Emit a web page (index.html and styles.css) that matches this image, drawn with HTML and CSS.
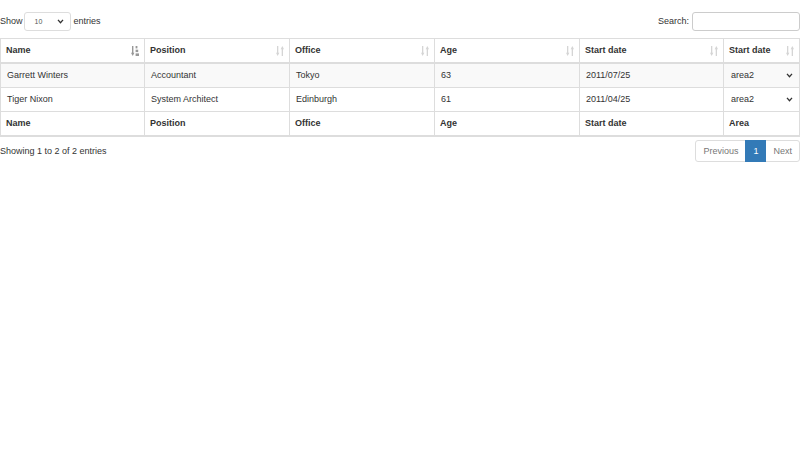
FILE: index.html
```html
<!DOCTYPE html>
<html lang="en">
<head>
<meta charset="utf-8">
<title>DataTable</title>
<link rel="stylesheet" href="styles.css">
</head>
<body>
<div class="wrapper">
  <div class="toolbar">
    <label class="length">Show
      <span class="length-select"><span>10</span>
        <svg class="chev" viewBox="0 0 8 6" width="7" height="5"><polyline points="1,1 4,4.4 7,1" fill="none" stroke="#333" stroke-width="1.6"/></svg>
      </span>
      entries</label>
    <label class="search">Search: <input type="text" class="search-input"></label>
  </div>
  <table class="grid">
    <thead>
      <tr>
        <th class="c1"><div class="th-in"><span>Name</span><svg class="sort asc" viewBox="0 0 8 10" width="8" height="10"><rect x="1" y="0" width="1.4" height="8"/><polygon points="0,6.8 3.4,6.8 1.7,10"/><rect x="4.6" y="0" width="1.8" height="2.4"/><rect x="4.6" y="3.7" width="2.6" height="2.4"/><rect x="4.6" y="7.4" width="3.4" height="2.6"/></svg></div></th>
        <th class="c2"><div class="th-in"><span>Position</span><svg class="sort both" viewBox="0 0 8 10" width="8" height="10"><rect x="1" y="0" width="1.3" height="8"/><polygon points="0,6.8 3.3,6.8 1.65,10"/><rect x="5.7" y="2" width="1.3" height="8"/><polygon points="4.7,3.2 8,3.2 6.35,0"/></svg></div></th>
        <th class="c3"><div class="th-in"><span>Office</span><svg class="sort both" viewBox="0 0 8 10" width="8" height="10"><rect x="1" y="0" width="1.3" height="8"/><polygon points="0,6.8 3.3,6.8 1.65,10"/><rect x="5.7" y="2" width="1.3" height="8"/><polygon points="4.7,3.2 8,3.2 6.35,0"/></svg></div></th>
        <th class="c4"><div class="th-in"><span>Age</span><svg class="sort both" viewBox="0 0 8 10" width="8" height="10"><rect x="1" y="0" width="1.3" height="8"/><polygon points="0,6.8 3.3,6.8 1.65,10"/><rect x="5.7" y="2" width="1.3" height="8"/><polygon points="4.7,3.2 8,3.2 6.35,0"/></svg></div></th>
        <th class="c5"><div class="th-in"><span>Start date</span><svg class="sort both" viewBox="0 0 8 10" width="8" height="10"><rect x="1" y="0" width="1.3" height="8"/><polygon points="0,6.8 3.3,6.8 1.65,10"/><rect x="5.7" y="2" width="1.3" height="8"/><polygon points="4.7,3.2 8,3.2 6.35,0"/></svg></div></th>
        <th class="c6"><div class="th-in"><span>Start date</span><svg class="sort both" viewBox="0 0 8 10" width="8" height="10"><rect x="1" y="0" width="1.3" height="8"/><polygon points="0,6.8 3.3,6.8 1.65,10"/><rect x="5.7" y="2" width="1.3" height="8"/><polygon points="4.7,3.2 8,3.2 6.35,0"/></svg></div></th>
      </tr>
    </thead>
    <tbody>
      <tr class="odd">
        <td>Garrett Winters</td>
        <td>Accountant</td>
        <td>Tokyo</td>
        <td>63</td>
        <td>2011/07/25</td>
        <td class="area-cell"><div class="area-select"><span>area2</span><svg class="chev" viewBox="0 0 8 6" width="7" height="5"><polyline points="1,1 4,4.4 7,1" fill="none" stroke="#333" stroke-width="1.6"/></svg></div></td>
      </tr>
      <tr class="even">
        <td>Tiger Nixon</td>
        <td>System Architect</td>
        <td>Edinburgh</td>
        <td>61</td>
        <td>2011/04/25</td>
        <td class="area-cell"><div class="area-select"><span>area2</span><svg class="chev" viewBox="0 0 8 6" width="7" height="5"><polyline points="1,1 4,4.4 7,1" fill="none" stroke="#333" stroke-width="1.6"/></svg></div></td>
      </tr>
    </tbody>
    <tfoot>
      <tr>
        <th>Name</th>
        <th>Position</th>
        <th>Office</th>
        <th>Age</th>
        <th>Start date</th>
        <th>Area</th>
      </tr>
    </tfoot>
  </table>
  <div class="bottom">
    <div class="info">Showing 1 to 2 of 2 entries</div>
    <ul class="pagination">
      <li class="page disabled">Previous</li>
      <li class="page active">1</li>
      <li class="page disabled">Next</li>
    </ul>
  </div>
</div>
</body>
</html>
```

FILE: styles.css
```css
html, body {
  margin: 0;
  padding: 0;
  background: #fff;
}
body {
  font-family: "Liberation Sans", Arial, sans-serif;
  font-size: 9px;
  line-height: 13px;
  color: #333;
}
.toolbar {
  display: flex;
  justify-content: space-between;
  align-items: center;
  padding-top: 12px;
  height: 19px;
}
.length, .search {
  display: flex;
  align-items: center;
  font-weight: normal;
}
.length-select {
  display: inline-flex;
  align-items: center;
  justify-content: space-between;
  box-sizing: border-box;
  width: 47px;
  height: 19px;
  margin: 0 3px 0 1px;
  padding: 0 6px 0 10px;
  border: 1px solid #ddd;
  border-radius: 3px;
  font-size: 7px;
  color: #555;
}
.search-input {
  box-sizing: border-box;
  width: 108px;
  height: 19px;
  margin: 0 0 0 3px;
  border: 1px solid #ccc;
  border-radius: 3px;
  padding: 0 5px;
  font: inherit;
}
.grid {
  width: 100%;
  margin-top: 7px;
  border-collapse: collapse;
  table-layout: fixed;
}
.grid th, .grid td {
  border: 1px solid #ddd;
  padding: 5px 5px 5px 6px;
  text-align: left;
  height: 13px;
  vertical-align: middle;
  white-space: nowrap;
}
.grid th { font-weight: bold; }
.grid thead th {
  border-bottom-width: 2px;
  padding-left: 5px;
}
.grid tfoot th {
  border-bottom-width: 2px;
  padding-left: 5px;
}
.grid .c1, .grid .c5 { width: 133px; }
.grid .c2, .grid .c3, .grid .c4 { width: 134px; }
.th-in {
  display: flex;
  justify-content: space-between;
  align-items: center;
}
.sort { fill: #333; }
.sort.both { opacity: 0.2; }
.sort.asc { opacity: 0.5; }
.odd td { background: #f9f9f9; }
.area-cell { padding-right: 5px; }
.area-select {
  display: flex;
  justify-content: space-between;
  align-items: center;
  padding-left: 1px;
  padding-right: 1px;
}
.bottom {
  display: flex;
  justify-content: space-between;
  align-items: center;
  margin-top: 3px;
}
.pagination {
  display: flex;
  list-style: none;
  margin: 0;
  padding: 0;
}
.page {
  box-sizing: border-box;
  height: 22px;
  display: flex;
  align-items: center;
  padding: 0 7px;
  border: 1px solid #ddd;
  margin-left: -1px;
  color: #777;
  background: #fff;
}
.page:first-child {
  margin-left: 0;
  border-radius: 3px 0 0 3px;
}
.page:last-child { border-radius: 0 3px 3px 0; }
.page.active {
  background: #337ab7;
  border-color: #337ab7;
  color: #fff;
  position: relative;
  z-index: 1;
}
```
